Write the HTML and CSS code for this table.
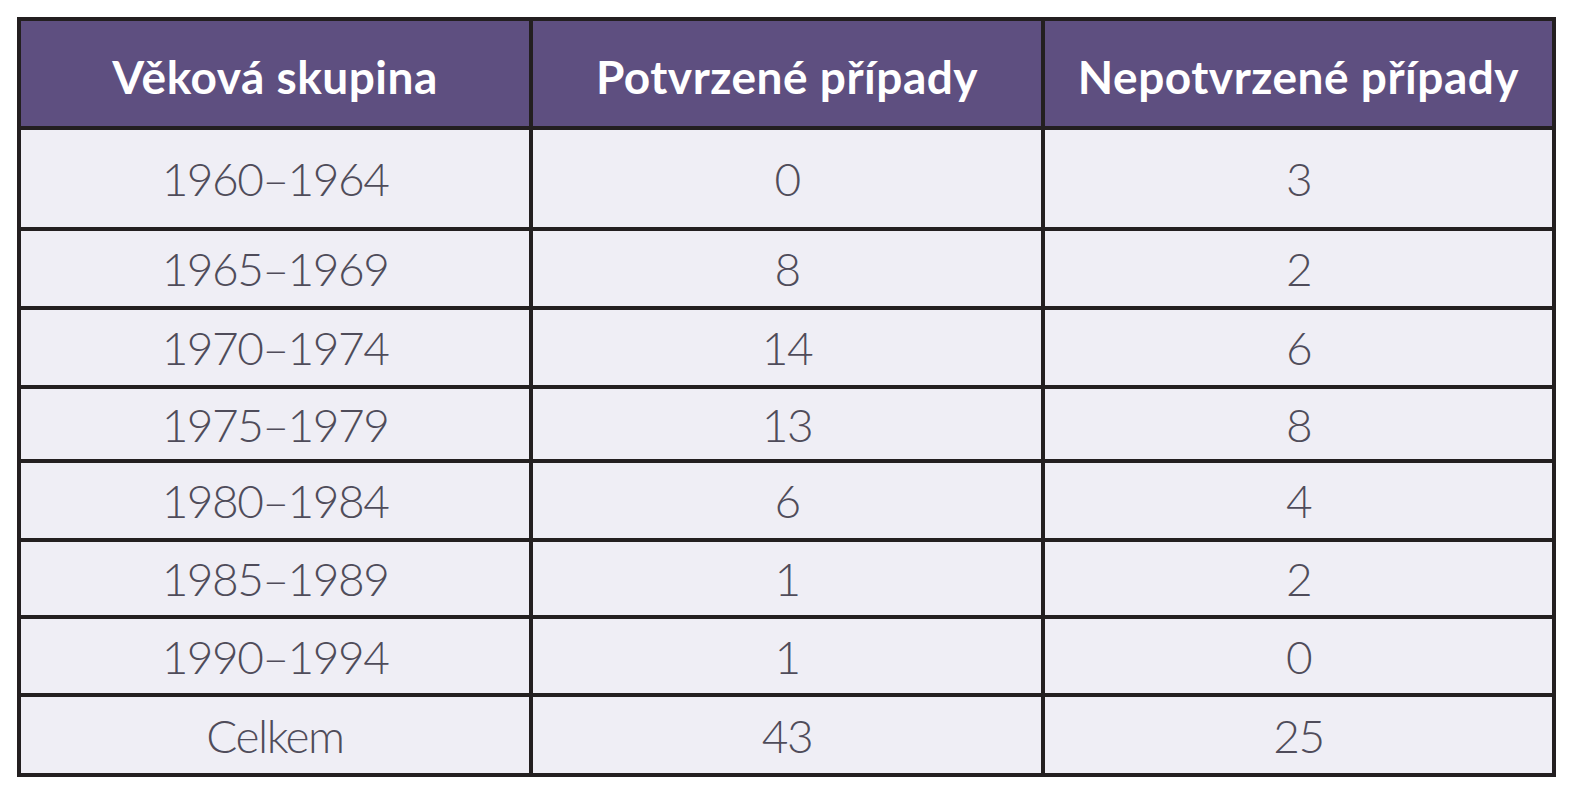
FILE: index.html
```html
<!DOCTYPE html>
<html lang="cs">
<head>
<meta charset="utf-8">
<title>Tabulka</title>
<link rel="stylesheet" href="styles.css">
</head>
<body>
<div class="table">
  <div class="cell head">Věková skupina</div>
  <div class="cell head">Potvrzené případy</div>
  <div class="cell head">Nepotvrzené případy</div>

  <div class="cell">1960–1964</div><div class="cell">0</div><div class="cell">3</div>
  <div class="cell">1965–1969</div><div class="cell">8</div><div class="cell">2</div>
  <div class="cell">1970–1974</div><div class="cell">14</div><div class="cell">6</div>
  <div class="cell">1975–1979</div><div class="cell">13</div><div class="cell">8</div>
  <div class="cell">1980–1984</div><div class="cell">6</div><div class="cell">4</div>
  <div class="cell">1985–1989</div><div class="cell">1</div><div class="cell">2</div>
  <div class="cell">1990–1994</div><div class="cell">1</div><div class="cell">0</div>
  <div class="cell">Celkem</div><div class="cell">43</div><div class="cell">25</div>
</div>
</body>
</html>
```
FILE: styles.css
```css
html, body {
  margin: 0;
  padding: 0;
  background: #ffffff;
}

body {
  font-family: "Lato", "Open Sans", sans-serif;
}

.table {
  margin: 17px 0 0 17px;
  width: 1539px;
  box-sizing: border-box;
  display: grid;
  grid-template-columns: 508px 508px 507px;
  grid-template-rows: 105px 97px 75px 75px 70px 75px 73px 74px 76px;
  gap: 4px;
  padding: 4px;
  background: #231f20;
}

.cell {
  background: #efeef5;
  color: #4f4c5a;
  font-size: 46px;
  font-weight: 300;
  letter-spacing: -1.5px;
  display: flex;
  align-items: center;
  justify-content: center;
}

.cell.head {
  background: #5e4f80;
  color: #ffffff;
  font-weight: 700;
  font-size: 46px;
  letter-spacing: 0.5px;
  padding-top: 6px;
  box-sizing: border-box;
}
```
